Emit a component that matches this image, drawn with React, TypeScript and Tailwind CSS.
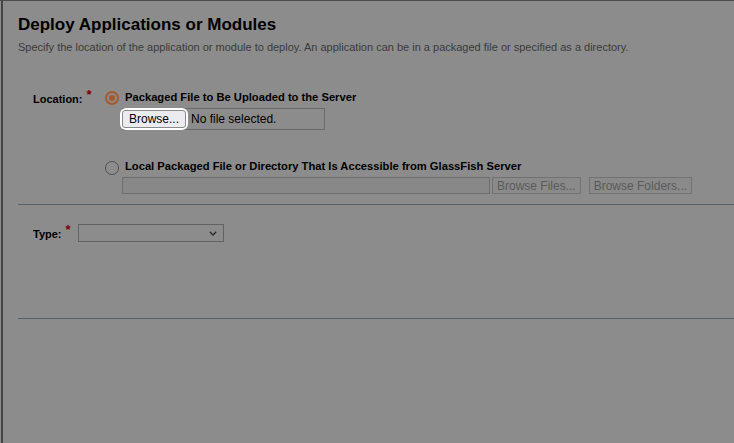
const font = { fontFamily: '"Liberation Sans", Arial, sans-serif' };

function Radio({ checked }: { checked?: boolean }) {
  if (checked) {
    return (
      <span className="flex h-[14px] w-[14px] shrink-0 items-center justify-center rounded-full border-2 border-[#a55a2c]">
        <span className="h-[6px] w-[6px] rounded-full bg-[#a55a2c]" />
      </span>
    );
  }
  return <span className="block h-[14px] w-[14px] shrink-0 rounded-full border-[1.5px] border-[#505050]" />;
}

function Required() {
  return <span className="-mt-[3px] ml-[4px] self-start text-[13px] leading-none font-bold text-[#7a0000]">*</span>;
}

export default function App() {
  return (
    <div className="h-[443px] w-[734px] overflow-hidden bg-[#8c8c8c] text-[11px] text-black" style={font}>
      <div className="h-full border-t border-[#4a4a4a] pl-px">
        <div className="h-full border-l-2 border-[#454545] pl-[15px]">
          {/* Heading */}
          <h1 className="pt-[14px] text-[17px] leading-[20px] font-bold">Deploy Applications or Modules</h1>
          <p className="mt-[5px] text-[11px] leading-[14px] text-[#3a3a3a]">
            Specify the location of the application or module to deploy. An application can be in a packaged file or specified as a directory.
          </p>

          {/* Location */}
          <div className="mt-[36px] flex">
            <div className="flex w-[87px] pl-[15px] pt-[1px]">
              <span className="font-bold">Location:</span>
              <Required />
            </div>
            <div className="flex flex-col">
              <div className="flex items-start gap-[6px]">
                <span className="mt-[1px]"><Radio checked /></span>
                <span className="text-[11.2px] font-bold leading-[14px]">Packaged File to Be Uploaded to the Server</span>
              </div>
              <div className="ml-[17px] mt-[3px] flex h-[22px] w-[203px] items-center border border-[#6a6a6a]">
                <div className="-ml-[3px] rounded-[6px] bg-white p-[2px]">
                  <div className="flex h-[18px] items-center rounded-[3px] border border-[#8a8a8a] bg-[#ececf0] px-[6px] text-[12px]">
                    Browse...
                  </div>
                </div>
                <span className="ml-[3px] text-[12px]">No file selected.</span>
              </div>

              <div className="mt-[29px] flex items-start gap-[6px]">
                <span className="mt-[2px]"><Radio /></span>
                <span className="text-[11.2px] font-bold leading-[14px]">Local Packaged File or Directory That Is Accessible from GlassFish Server</span>
              </div>
              <div className="ml-[17px] mt-[2px] flex items-center">
                <div className="h-[17px] w-[368px] border border-[#6e6e6e] bg-[#888888]" />
                <div className="ml-[2px] flex h-[17px] items-center border border-[#727272] bg-[#8a8a8a] px-[4px] text-[12px] text-[#5a5a5a]">
                  Browse Files...
                </div>
                <div className="ml-[8px] flex h-[17px] items-center border border-[#727272] bg-[#8a8a8a] px-[4px] text-[12px] text-[#5a5a5a]">
                  Browse Folders...
                </div>
              </div>
            </div>
          </div>

          <div className="mt-[10px] h-px bg-[#55606a]" />

          {/* Type */}
          <div className="mt-[19px] flex items-start">
            <div className="flex w-[60px] pl-[15px] pt-[2px]">
              <span className="font-bold">Type:</span>
              <Required />
            </div>
            <div className="flex h-[18px] w-[146px] items-center justify-end border border-[#626262] pr-[6px]">
              <svg width="8" height="5" viewBox="0 0 8 5" fill="none" stroke="#2a2a2a" strokeWidth="1.3">
                <path d="M0.8 0.8 L4 4 L7.2 0.8" />
              </svg>
            </div>
          </div>

          <div className="mt-[75px] h-px bg-[#55606a]" />
        </div>
      </div>
    </div>
  );
}
